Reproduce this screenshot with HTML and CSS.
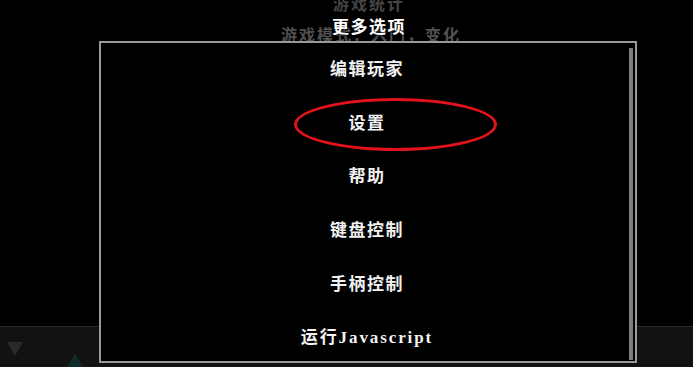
FILE: index.html
```html
<!DOCTYPE html>
<html lang="zh">
<head>
    <meta charset="UTF-8">
    <meta name="viewport" content="width=device-width, initial-scale=1.0">
    <title>更多选项</title>
    <link rel="stylesheet" href="styles.css">
</head>
<body>
    <div class="screen">
        <div class="header">
            <div class="ghost ghost-top">游戏统计</div>
            <div class="ghost ghost-mode">游戏模式：入门，变化</div>
            <div class="title">更多选项</div>
        </div>

        <div class="panel">
            <ul class="menu">
                <li class="item">编辑玩家</li>
                <li class="item">设置</li>
                <li class="item">帮助</li>
                <li class="item">键盘控制</li>
                <li class="item">手柄控制</li>
                <li class="item item-js">运行Javascript</li>
            </ul>
            <div class="scrollbar"></div>
            <div class="mark"></div>
        </div>

        <div class="strip">
            <span class="tri-down"></span>
            <span class="blob"></span>
        </div>
    </div>
</body>
</html>
```

FILE: styles.css
```css
* {
    margin: 0;
    padding: 0;
    box-sizing: border-box;
}

body {
    background: #000;
    font-family: "Liberation Serif", "Noto Sans CJK SC", serif;
    font-weight: bold;
    color: #f2f2f2;
    overflow: hidden;
}

.screen {
    width: 693px;
    height: 367px;
    display: grid;
    grid-template-columns: 99px 538px 1fr;
    grid-template-rows: 41px 285px 41px;
    overflow: hidden;
}

/* cabecera con textos superpuestos */
.header {
    grid-column: 2;
    grid-row: 1;
    display: grid;
    justify-items: center;
    align-items: start;
}

.header > div {
    grid-area: 1 / 1;
    line-height: 17px;
    white-space: nowrap;
}

.ghost {
    color: #444;
    font-size: 16px;
    letter-spacing: 2px;
}

.ghost-top {
    margin-top: -4px;
    margin-left: 2px;
}

.ghost-mode {
    margin-top: 27px;
    color: #505050;
    margin-left: 6px;
}

.title {
    margin-top: 19px;
    font-size: 17px;
    letter-spacing: 1.5px;
    color: #fff;
    text-shadow: 0 0 2px #000, 0 0 3px #000;
    margin-left: 2px;
}

.panel {
    grid-column: 2;
    grid-row: 2 / 4;
    margin-bottom: 4px;
    border: 2px solid #9a9a9a;
    background: #000;
    display: flex;
    position: relative;
    z-index: 2;
}

.menu {
    list-style: none;
    flex: 1;
}

.item {
    height: 53.7px;
    line-height: 53.7px;
    text-align: center;
    font-size: 17px;
    letter-spacing: 1.5px;
    padding-left: 4px;
    white-space: nowrap;
}

.item-js {
    letter-spacing: 1.9px;
}

.scrollbar {
    width: 4px;
    margin: 5px 2px 1px 0;
    background: #7c7c7c;
}

.mark {
    position: absolute;
    left: 193px;
    top: 55px;
    width: 203px;
    height: 53px;
    border: 3px solid #e4131b;
    border-radius: 50%;
}

.strip {
    grid-column: 1 / 4;
    grid-row: 3;
    background: #121212;
    border-top: 1px solid #2c2c2c;
    position: relative;
}

.tri-down {
    position: absolute;
    left: 7px;
    top: 15px;
    width: 0;
    height: 0;
    border-left: 8px solid transparent;
    border-right: 8px solid transparent;
    border-top: 14px solid #2a2a2a;
}

.blob {
    position: absolute;
    left: 66px;
    top: 26px;
    width: 0;
    height: 0;
    border-left: 9px solid transparent;
    border-right: 9px solid transparent;
    border-bottom: 16px solid #0f2a2b;
}
```
